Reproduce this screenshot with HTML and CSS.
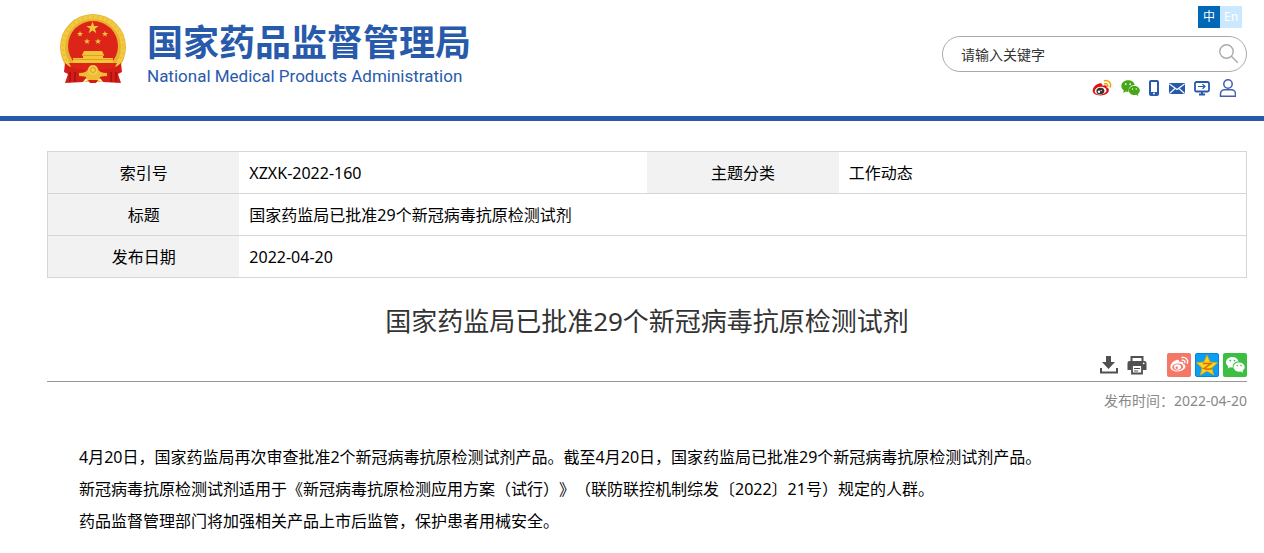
FILE: index.html
```html
<!DOCTYPE html>
<html lang="zh-CN">
<head>
<meta charset="utf-8">
<meta name="viewport" content="width=device-width, initial-scale=1">
<title>国家药监局已批准29个新冠病毒抗原检测试剂</title>
<link rel="stylesheet" href="styles.css">
</head>
<body>
<header class="site-header">
  <a class="brand" href="#">
    <svg class="emblem" viewBox="0 0 68 72" aria-hidden="true">
      <defs><path id="star" d="M0-10 2.4-3.1 9.5-3.1 3.8 1.2 5.9 8.1 0 4-5.9 8.1-3.8 1.2-9.5-3.1-2.4-3.1Z"/></defs>
      <circle cx="34" cy="34" r="33" fill="#e8b32c"/>
      <circle cx="34" cy="34" r="30" fill="none" stroke="#f2cb45" stroke-width="4"/>
      <circle cx="34" cy="34" r="30" fill="none" stroke="#ecbd38" stroke-width="2" stroke-dasharray="2 3"/>
      <circle cx="34" cy="33" r="25" fill="#dd2418"/>
      <g fill="#f2c63a">
        <use href="#star" transform="translate(33.500 15) scale(.65)"/>
        <use href="#star" transform="translate(21 21) scale(.32)"/>
        <use href="#star" transform="translate(46 21) scale(.32)"/>
        <use href="#star" transform="translate(28 28.500) scale(.32)"/>
        <use href="#star" transform="translate(39 28.500) scale(.32)"/>
        <path d="M25 38h18l2 4h-1v3h10v5H14v-5h10v-3h-1Z"/>
      </g>
      <path d="M23 42.500h22M14 46.500h40" stroke="#e79c22" stroke-width="1"/>
      <path d="M10 50h48l-4 8H14Z" fill="#dd2418"/>
      <path d="M6 50q7 7 19 6l5 5-6 8-18 1 3-9-4-2Z M62 50q-7 7-19 6l-5 5 6 8 18 1-3-9 4-2Z" fill="#d51d17"/>
      <path d="M11 59v10M16 59v10M57 59v10M52 59v10" stroke="#9f1310" stroke-width="1.500"/>
      <path d="M20 60q8 0 9-4 5-6 10 0 1 4 9 4v3q-8 0-10 3 3 3 7 3H23q4 0 7-3-2-3-10-3Z" fill="#eebc35"/>
      <circle cx="34" cy="57" r="5" fill="#f4ce4b"/>
      <circle cx="34" cy="57" r="2.500" fill="none" stroke="#d79b20"/>
      <path d="M29 67h10l-2 3h-6Z" fill="#d51d17"/>
    </svg>
    <span class="brand-text">
      <span class="brand-cn">国家药品监督管理局</span>
      <span class="brand-en">National Medical Products Administration</span>
    </span>
  </a>
  <div class="header-tools">
    <nav class="languages" aria-label="语言">
      <a class="lang lang-active" href="#">中</a>
      <a class="lang" href="#">En</a>
    </nav>
    <form class="search">
      <input class="search-input" type="text" aria-label="关键字" value="请输入关键字">
      <button class="search-button" type="button" aria-label="搜索">
        <svg width="20" height="20" viewBox="0 0 20 20" fill="none" stroke="#aaa" stroke-width="1.400"><circle cx="7.500" cy="7.500" r="6.700"/><path d="m12.300 12.300 6.500 6.500"/></svg>
      </button>
    </form>
    <nav class="channels" aria-label="快捷入口">
      <a href="#" aria-label="微博"><svg width="20" height="18" viewBox="0 0 20 18"><path d="M7 4.500C4 5.300.5 8.700.7 11.800c.2 3.200 4 4.800 8 4.600 4.500-.2 8.300-2.700 8.200-5.500 0-1.400-1.200-2-2.300-2.300.8-2.300-1-3-4.300-1.800.5-2-.8-3-3.300-2.300Z" fill="#df1010"/><ellipse cx="8.600" cy="11.700" rx="5.900" ry="3.900" fill="#fff" transform="rotate(-8 8.600 11.700)"/><ellipse cx="8.400" cy="12" rx="4" ry="3.300" fill="#333" transform="rotate(-10 8.400 12)"/><circle cx="7" cy="12.800" r="1.200" fill="#fff"/><circle cx="9.200" cy="11.400" r=".6" fill="#fff"/><path d="M12.500 1.700c4-1 7 2.300 5.800 6.300M12.700 4.700c2-.5 3.500 1 3 2.900" fill="none" stroke="#f0a20b" stroke-width="1.500" stroke-linecap="round"/></svg></a>
      <a href="#" aria-label="微信"><svg width="19" height="18" viewBox="0 0 19 18"><path d="M7 1.300C3.300 1.300.3 3.800.3 7c0 1.800 1 3.300 2.500 4.400L2.200 14l2.600-1.600c.9.200 2 .3 3 .2-.8-3.600 2-6.800 6-6.700C13.200 3.200 10.500 1.300 7 1.300Z" fill="#48a716"/><path d="M13.300 6.900c-3 0-5.400 2-5.400 4.500s2.400 4.600 5.400 4.600c.7 0 1.200-.1 1.800-.2l2.200 1.200-.5-2c1.200-.8 2-2.100 2-3.600 0-2.500-2.500-4.500-5.500-4.500Z" fill="#48a716"/><g fill="#fff"><circle cx="4.700" cy="5.100" r=".9"/><circle cx="9.200" cy="5.100" r=".9"/><circle cx="11.500" cy="10" r=".7"/><circle cx="15.200" cy="10" r=".7"/></g></svg></a>
      <a href="#" aria-label="移动版"><svg width="10" height="18" viewBox="0 0 10 18"><rect x="1" y="2" width="8" height="14" rx="1" fill="none" stroke="#285aab" stroke-width="2"/><path d="M1 13h8v3H1Z" fill="#285aab"/><circle cx="5" cy="14.500" r=".9" fill="#fff"/></svg></a>
      <a href="#" aria-label="邮箱"><svg width="17" height="18" viewBox="0 0 17 18"><rect x="1" y="4" width="16" height="11" rx="1" fill="#285aab"/><path d="m1.500 5 7.500 5.500L16.500 5M1.500 14.500 7 9.500M16.500 14.500 11 9.500" fill="none" stroke="#fff" stroke-width="1.100"/></svg></a>
      <a href="#" aria-label="网站"><svg width="16" height="18" viewBox="0 0 16 18" fill="none" stroke="#285aab"><rect x="1" y="3" width="14" height="9.500" rx="1.500" stroke-width="1.800"/><path d="M4 7.500h6.500M8.500 5.200l2.500 2.300-2.500 2.300" stroke-width="1.200"/><path d="M8 12.500V15M5 15.500h6" stroke-width="2"/></svg></a>
      <a href="#" aria-label="个人中心"><svg width="17" height="18" viewBox="0 0 17 18" fill="none" stroke="#4161ae" stroke-width="1.500"><circle cx="9" cy="5" r="4.200"/><path d="M1.500 17.200v-2.400c0-2.400 2-4 4.500-4h6c2.500 0 4.500 1.600 4.500 4v2.400Z"/></svg></a>
    </nav>
  </div>
</header>
<main class="page">
  <table class="meta">
    <tbody>
      <tr><th scope="row">索引号</th><td>XZXK-2022-160</td><th scope="row">主题分类</th><td>工作动态</td></tr>
      <tr><th scope="row">标题</th><td colspan="3">国家药监局已批准29个新冠病毒抗原检测试剂</td></tr>
      <tr><th scope="row">发布日期</th><td colspan="3">2022-04-20</td></tr>
    </tbody>
  </table>
  <article>
    <h1 class="title">国家药监局已批准29个新冠病毒抗原检测试剂</h1>
    <div class="actions">
      <button type="button" aria-label="下载"><svg width="20" height="24" viewBox="0 0 20 24"><path d="M7 3h5v6h4l-6.500 7L3 9h4Z" fill="#505050"/><path d="M2 15v4.500h16V15" fill="none" stroke="#505050" stroke-width="2"/></svg></button>
      <button type="button" aria-label="打印"><svg width="20" height="24" viewBox="0 0 20 24"><path d="M4.500 8V4h11v4" fill="none" stroke="#505050" stroke-width="2"/><path d="M2.500 8h15Q19.500 8 19.500 10v7h-4v-4h-11v4h-4v-7q0-2 2-2Z" fill="#505050"/><path d="M5 13v7.500h10V13" fill="#fff" stroke="#505050" stroke-width="1.800"/><path d="M7 15.500h6M7 18h4" stroke="#505050" stroke-width="1.200"/><circle cx="16.700" cy="10.300" r=".9" fill="#fff"/></svg></button>
      <div class="share">
        <a href="#" aria-label="分享到微博"><svg width="24" height="24" viewBox="0 0 24 24"><rect width="24" height="24" rx="2" fill="#f47767"/><path d="M9.500 7C6.300 8 3.300 11 3.400 14c.1 3 3.500 4.600 7.300 4.500 4.300-.2 7.800-2.500 7.700-5.200 0-1.200-1-2-2.200-2.200.6-2-.8-2.900-4-1.800.5-1.900-.6-2.800-2.700-2.300Z" fill="#fff"/><ellipse cx="10.700" cy="14" rx="5.500" ry="3.500" fill="#f47767" transform="rotate(-8 10.700 14)"/><ellipse cx="10.500" cy="14" rx="3.500" ry="2.800" fill="#fff"/><circle cx="9.700" cy="14.700" r="1.200" fill="#f47767"/><path d="M15 4.500c3.800-.7 6.500 2 5.300 5.800M15.200 7.100c2-.3 3.200 1 2.600 2.600" fill="none" stroke="#fff" stroke-width="1.300" stroke-linecap="round"/></svg></a>
        <a href="#" aria-label="分享到QQ空间"><svg width="24" height="24" viewBox="0 0 24 24"><rect x=".5" y=".5" width="23" height="23" rx="1.500" fill="#0a9ff1" stroke="#0784d9"/><path d="m12 2 3 7 7.500.8-5.700 5 1.800 7.200-6.600-4-6.600 4 1.800-7.200-5.700-5L9 9Z" fill="#ffd21c" stroke="#e7a500" stroke-width=".8"/><path d="M8 10.500h8l-7 5q4 1.500 8 0" fill="none" stroke="#d96c00" stroke-width="1.500"/></svg></a>
        <a href="#" aria-label="分享到微信"><svg width="24" height="24" viewBox="0 0 24 24"><rect width="24" height="24" rx="2" fill="#3bbf43"/><path d="M9.300 4C5.800 4 3 6.300 3 9.200c0 1.700.9 3.100 2.300 4L4.700 15.500l2.500-1.300c.8.200 1.800.3 2.700.2-.7-3.300 2-6 5.700-5.900C15 5.900 12.500 4 9.300 4Z" fill="#fff"/><path d="M16 9.500c-3.100 0-5.500 2-5.500 4.600s2.400 4.600 5.500 4.600l1.800-.2 2.200 1.200-.5-2c1.300-.8 2.200-2.100 2.200-3.600 0-2.600-2.600-4.600-5.700-4.600Z" fill="#fff"/><g fill="#3bbf43"><circle cx="7.300" cy="7.600" r=".9"/><circle cx="11.500" cy="7.600" r=".9"/><circle cx="14.200" cy="12.600" r=".8"/><circle cx="18" cy="12.600" r=".8"/></g></svg></a>
      </div>
    </div>
    <p class="published">发布时间：2022-04-20</p>
    <div class="content">
      <p>4月20日，国家药监局再次审查批准2个新冠病毒抗原检测试剂产品。截至4月20日，国家药监局已批准29个新冠病毒抗原检测试剂产品。</p>
      <p>新冠病毒抗原检测试剂适用于《新冠病毒抗原检测应用方案（试行）》（联防联控机制综发〔2022〕21号）规定的人群。</p>
      <p>药品监督管理部门将加强相关产品上市后监管，保护患者用械安全。</p>
    </div>
  </article>
</main>
</body>
</html>
```
FILE: styles.css
```css
* { box-sizing: border-box; }

body {
  margin: 0;
  background: #fff;
  color: #000;
  font-family: "Noto Sans", "Noto Sans CJK SC", sans-serif;
  font-size: 16px;
  text-spacing-trim: space-all;
}

a { color: inherit; text-decoration: none; }
svg { display: block; }

button {
  padding: 0;
  border: 0;
  background: none;
  cursor: pointer;
}

.site-header {
  display: flex;
  justify-content: space-between;
  align-items: flex-start;
  padding: 6px 17px 19px 59px;
  border-bottom: 5px solid #285aab;
}

.brand {
  display: flex;
  gap: 20px;
  padding-top: 7px;
  color: #285aab;
}

.emblem { width: 68px; height: 72px; }

.brand-text { display: flex; flex-direction: column; padding-top: 1px; }

.brand-cn {
  font-family: "Noto Sans CJK SC", sans-serif;
  font-size: 36px;
  font-weight: 700;
  line-height: 52px;
}

.brand-en {
  font-family: Roboto, sans-serif;
  font-size: 17px;
  line-height: 20px;
}

.header-tools { width: 305px; }

.languages { display: flex; justify-content: flex-end; padding-right: 5px; }

.lang {
  width: 22px;
  background: #cce8ff;
  color: #fff;
  font-size: 12px;
  line-height: 22px;
  text-align: center;
}

.lang-active { background: #0068b7; }

.search {
  display: flex;
  align-items: center;
  height: 36px;
  margin-top: 8px;
  padding: 0 7px 0 18px;
  border: 1px solid #aaa;
  border-radius: 18px;
}

.search-input {
  flex: 1;
  min-width: 0;
  padding: 0;
  border: 0;
  outline: 0;
  background: none;
  color: #333;
  font: 14px "Noto Sans CJK SC", sans-serif;
}

.channels {
  display: flex;
  justify-content: flex-end;
  gap: 9px;
  margin-top: 7px;
  padding-right: 11px;
}

.page { padding: 30px 17px 0 47px; }

.meta {
  width: 100%;
  border-collapse: collapse;
  table-layout: fixed;
  border: 1px solid #d6d6d6;
}

.meta tr { border-bottom: 1px solid #d6d6d6; }
.meta th, .meta td { height: 42px; padding: 0 10px; line-height: 24px; }
.meta th { width: 16%; background: #f2f2f2; font-weight: 400; text-align: center; }
.meta td { width: 34%; }

.title {
  margin: 24px 0 12px;
  color: #333;
  font-size: 26px;
  font-weight: 400;
  line-height: 39px;
  text-align: center;
}

.actions {
  display: flex;
  justify-content: flex-end;
  gap: 8px;
  padding-bottom: 4px;
  border-bottom: 1px solid #999;
}

.share { display: flex; gap: 4px; margin-left: 12px; }

.published {
  margin: 8px 0 29px;
  color: #888;
  font-size: 14px;
  line-height: 22px;
  text-align: right;
}

.content { padding-left: 32px; line-height: 32px; }
.content p { margin: 0; }
```
